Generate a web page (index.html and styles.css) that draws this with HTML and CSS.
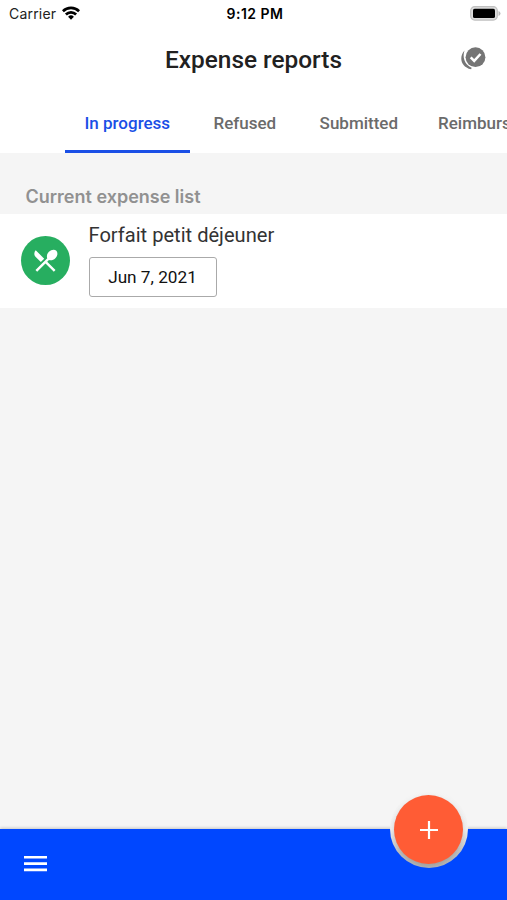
FILE: index.html
```html
<!DOCTYPE html>
<html lang="en">
<head>
<meta charset="utf-8">
<title>Expense reports</title>
<link rel="stylesheet" href="styles.css">
</head>
<body>
<div class="app">
  <div class="status">
    <div class="carrier"><span>Carrier</span>
      <svg class="wifi" width="18" height="14" viewBox="0 0 18 14"><g fill="none" stroke="#000" stroke-width="2.7"><path d="M.9 5.2a11.5 11.5 0 0 1 16.2 0"/><path d="M3.9 8.5a7.2 7.2 0 0 1 10.2 0"/></g><path d="M9 13.7 6.1 10.7a4.1 4.1 0 0 1 5.800 0z"/></svg>
    </div>
    <span class="time">9:12 PM</span>
    <svg class="battery" width="31" height="15" viewBox="0 0 31 15"><rect x=".7" y=".7" width="26.600" height="13.400" rx="4" fill="#dedede" stroke="#c0c0c0" stroke-width="1.200"/><rect x="3" y="2.800" width="22" height="9.200" rx="1.600"/><path d="M28.500 5v5q2-.8 2-2.500T28.500 5z" fill="#bbb"/></svg>
  </div>
  <header class="header">
    <h1>Expense reports</h1>
    <svg class="checks" width="26" height="24" viewBox="0 0 26 24"><circle cx="15.500" cy="10.200" r="9.900" fill="#757575"/><path d="m10.700 10.400 3.500 3.500 6.300-6.900" fill="none" stroke="#fff" stroke-width="2.500"/><path d="M4.500 3.500C-.8 9-.2 19.500 11.200 22.300L11.600 20.700C4.800 18 2.100 10.500 4.500 3.500z" fill="#757575"/></svg>
  </header>
  <nav class="tabs">
    <a class="tab active">In progress</a><a class="tab">Refused</a><a class="tab">Submitted</a><a class="tab">Reimbursed</a>
  </nav>
  <main>
    <h2>Current expense list</h2>
    <article class="expense">
      <span class="category"><svg width="29" height="29" viewBox="0 0 24 24"><path fill="#fff" d="M8.100 13.340l2.830-2.830L3.910 3.500a4.008 4.008 0 0 0 0 5.660l4.190 4.180zm6.780-1.810c1.530.71 3.680.21 5.270-1.380 1.910-1.910 2.280-4.650.81-6.120-1.460-1.460-4.200-1.100-6.120.81-1.590 1.590-2.090 3.740-1.380 5.270L3.700 19.870l1.410 1.410L12 14.410l6.880 6.880 1.410-1.410L13.410 13l1.470-1.470z"/></svg></span>
      <div class="details">
        <h3>Forfait petit déjeuner</h3>
        <span class="date">Jun 7, 2021</span>
      </div>
    </article>
  </main>
  <footer class="bar">
    <svg width="24" height="16" viewBox="0 0 24 16" fill="#fff"><path d="M0 0h23v2.600H0zM0 6.300h23v2.600H0zM0 12.600h23v2.600H0z"/></svg>
    <div class="notch"><button class="fab" aria-label="Add"><svg width="18" height="18" viewBox="0 0 18 18"><path d="M9 0v18M0 9h18" stroke="#fff" stroke-width="2.200"/></svg></button></div>
  </footer>
</div>
</body>
</html>
```
FILE: styles.css
```css
* { box-sizing: border-box; }
body { margin: 0; font-family: Roboto, "Liberation Sans", sans-serif; }
h1, h2, h3 { margin: 0; }
.app { height: 900px; display: flex; flex-direction: column; overflow: hidden; background: #f5f5f5; }
.status { height: 28px; flex: none; display: grid; grid-template-columns: 1fr auto 1fr; align-items: center; padding: 0 6px 1px 9px; background: #fff; font: 14px Inter, sans-serif; }
.carrier { display: flex; align-items: center; gap: 6px; color: #222; letter-spacing: .2px; }
.wifi { margin-top: -1px; }
.time { font-weight: 600; letter-spacing: .5px; }
.battery { justify-self: end; margin-top: -1px; }
.header { height: 64px; flex: none; display: grid; grid-template-columns: 1fr auto 1fr; align-items: center; padding: 0 21px; background: #fff; }
h1 { grid-column: 2; font-size: 24.4px; line-height: 30px; font-weight: 500; color: #212121; }
.checks { justify-self: end; margin-top: -2px; }
.tabs { height: 61px; flex: none; display: flex; padding-left: 64.5px; background: #fff; overflow: hidden; }
.tab { flex: none; min-width: 109.5px; padding: 0 20px; text-align: center; font-size: 17px; font-weight: 500; line-height: 62px; color: #6b6b6b; }
.active { color: #1a4fe6; border-bottom: 3px solid #1a4fe6; }
main { flex: 1; }
h2 { height: 61px; padding: 31px 25.500px 0; font: 600 18px/26px Inter, sans-serif; color: #919191; }
.expense { height: 94px; display: flex; padding: 0 20.5px; gap: 19px; background: #fff; }
.category { width: 49px; height: 49px; margin-top: 22px; border-radius: 50%; background: #27ae60; display: grid; place-items: center; }
.details { display: flex; flex-direction: column; align-items: flex-start; padding-top: 7px; }
h3 { font-size: 20.100px; line-height: 28px; font-weight: 400; color: #333; }
.date { width: 128px; height: 40px; margin-top: 8px; border: 1px solid #aaa; border-radius: 3px; text-align: center; font-size: 17.200px; line-height: 38px; color: #111; }
.bar { position: relative; height: 71px; flex: none; padding: 27px 24px; background: #0047ff; box-shadow: 0 -1px 3px rgba(0,0,0,.2); }
.bar > svg { display: block; }
.notch { position: absolute; right: 39.5px; top: -39px; width: 78px; height: 78px; padding: 5px 0 0 4.500px; border-radius: 50%; overflow: hidden; background: linear-gradient(#f5f5f5 0, #f0f0f0 50%, #c2c2c2 80%, #b4b4b4 100%); }
.fab { display: grid; place-items: center; width: 69px; height: 69px; padding: 0; border: 0; border-radius: 50%; background: #ff5c35; box-shadow: 0 2px 5px rgba(0,0,0,.15); }
```
